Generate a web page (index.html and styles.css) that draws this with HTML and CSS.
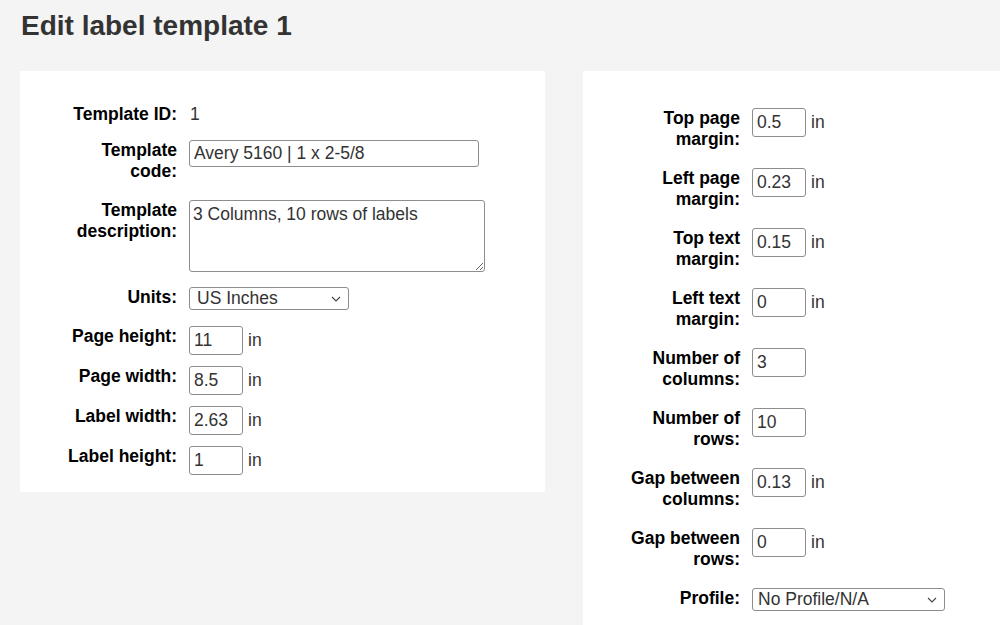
FILE: index.html
```html
<!DOCTYPE html>
<html>
<head>
<meta charset="utf-8">
<link rel="stylesheet" href="styles.css">
</head>
<body>
<h1 class="title">Edit label template 1</h1>
<div class="panels">
  <div class="panel panel-left">
    <div class="form">
      <div class="row row-id">
        <label class="lbl">Template ID:</label>
        <span class="value">1</span>
      </div>
      <div class="row">
        <label class="lbl">Template code:</label>
        <input class="field field-code" type="text" value="Avery 5160 | 1 x 2-5/8">
      </div>
      <div class="row">
        <label class="lbl">Template description:</label>
        <textarea class="field field-desc">3 Columns, 10 rows of labels</textarea>
      </div>
      <div class="row">
        <label class="lbl">Units:</label>
        <div class="select-wrap select-units">
          <select class="field select"><option>US Inches</option></select>
          <svg class="chev" width="10" height="6" viewBox="0 0 10 6"><path d="M1 1 L5 5 L9 1" fill="none" stroke="#444" stroke-width="1.1"/></svg>
        </div>
      </div>
      <div class="row">
        <label class="lbl">Page height:</label>
        <div class="unit-group"><input class="field num" type="text" value="11"><span class="unit">in</span></div>
      </div>
      <div class="row">
        <label class="lbl">Page width:</label>
        <div class="unit-group"><input class="field num" type="text" value="8.5"><span class="unit">in</span></div>
      </div>
      <div class="row">
        <label class="lbl">Label width:</label>
        <div class="unit-group"><input class="field num" type="text" value="2.63"><span class="unit">in</span></div>
      </div>
      <div class="row row-last">
        <label class="lbl">Label height:</label>
        <div class="unit-group"><input class="field num" type="text" value="1"><span class="unit">in</span></div>
      </div>
    </div>
  </div>
  <div class="panel panel-right">
    <div class="form">
      <div class="row">
        <label class="lbl">Top page margin:</label>
        <div class="unit-group"><input class="field num" type="text" value="0.5"><span class="unit">in</span></div>
      </div>
      <div class="row">
        <label class="lbl">Left page margin:</label>
        <div class="unit-group"><input class="field num" type="text" value="0.23"><span class="unit">in</span></div>
      </div>
      <div class="row">
        <label class="lbl">Top text margin:</label>
        <div class="unit-group"><input class="field num" type="text" value="0.15"><span class="unit">in</span></div>
      </div>
      <div class="row">
        <label class="lbl">Left text margin:</label>
        <div class="unit-group"><input class="field num" type="text" value="0"><span class="unit">in</span></div>
      </div>
      <div class="row">
        <label class="lbl">Number of columns:</label>
        <div class="unit-group"><input class="field num" type="text" value="3"></div>
      </div>
      <div class="row">
        <label class="lbl">Number of rows:</label>
        <div class="unit-group"><input class="field num" type="text" value="10"></div>
      </div>
      <div class="row">
        <label class="lbl">Gap between columns:</label>
        <div class="unit-group"><input class="field num" type="text" value="0.13"><span class="unit">in</span></div>
      </div>
      <div class="row">
        <label class="lbl">Gap between rows:</label>
        <div class="unit-group"><input class="field num" type="text" value="0"><span class="unit">in</span></div>
      </div>
      <div class="row">
        <label class="lbl">Profile:</label>
        <div class="select-wrap select-profile">
          <select class="field select"><option>No Profile/N/A</option></select>
          <svg class="chev" width="10" height="6" viewBox="0 0 10 6"><path d="M1 1 L5 5 L9 1" fill="none" stroke="#444" stroke-width="1.1"/></svg>
        </div>
      </div>
    </div>
  </div>
</div>
</body>
</html>
```

FILE: styles.css
```css
html, body {
  margin: 0;
  padding: 0;
  background: #f3f4f3;
  font-family: "Liberation Sans", Arial, sans-serif;
  color: #000;
  overflow: hidden;
}

body {
  padding: 0 0 0 20px;
  height: 625px;
  box-sizing: border-box;
}

.title {
  margin: 0;
  padding: 8px 0 0 1px;
  font-size: 28px;
  line-height: 36px;
  font-weight: bold;
  color: #333;
}

.panels {
  display: flex;
  align-items: flex-start;
  gap: 38px;
  margin-top: 27px;
}

.panel {
  background: #fff;
  box-sizing: border-box;
}

.panel-left {
  width: 525px;
  padding: 33px 0 6px 45px;
}

.panel-right {
  flex: 1;
  height: 560px;
  padding: 37px 0 0 45px;
}

.form {
  display: flex;
  flex-direction: column;
}

.row {
  display: flex;
  align-items: flex-start;
  padding-bottom: 11px;
}

.row-id {
  padding-bottom: 8px;
}

.lbl {
  width: 112px;
  margin-right: 12px;
  padding-bottom: 7px;
  text-align: right;
  font-weight: bold;
  font-size: 17.5px;
  line-height: 21px;
  color: #000;
}

.value {
  font-size: 17.5px;
  line-height: 21px;
  color: #333;
  padding-left: 1px;
}

.field {
  box-sizing: border-box;
  font-family: "Liberation Sans", Arial, sans-serif;
  font-size: 17.5px;
  color: #333;
  border: 1px solid #8d8d8d;
  border-radius: 3px;
  background: #fff;
  margin: 0;
  outline: none;
}

.field-code {
  width: 290px;
  height: 27px;
  padding: 0 4px;
}

.field-desc {
  width: 296px;
  height: 72px;
  padding: 3px 3px;
  line-height: 21px;
  margin-bottom: 4px;
  resize: vertical;
}

.unit-group {
  display: flex;
  align-items: center;
  gap: 5px;
}

.num {
  width: 54px;
  height: 29px;
  padding: 0 4px;
}

.unit {
  font-size: 17.5px;
  color: #333;
}

.select-wrap {
  position: relative;
}

.select {
  -webkit-appearance: none;
  appearance: none;
  height: 23px;
  padding: 0 20px 0 7px;
  line-height: 21px;
  border-radius: 3px;
}

.select-units .select {
  width: 160px;
}

.select-profile .select {
  width: 193px;
  padding-left: 5px;
}

.chev {
  position: absolute;
  right: 8px;
  top: 9px;
  pointer-events: none;
}
```
